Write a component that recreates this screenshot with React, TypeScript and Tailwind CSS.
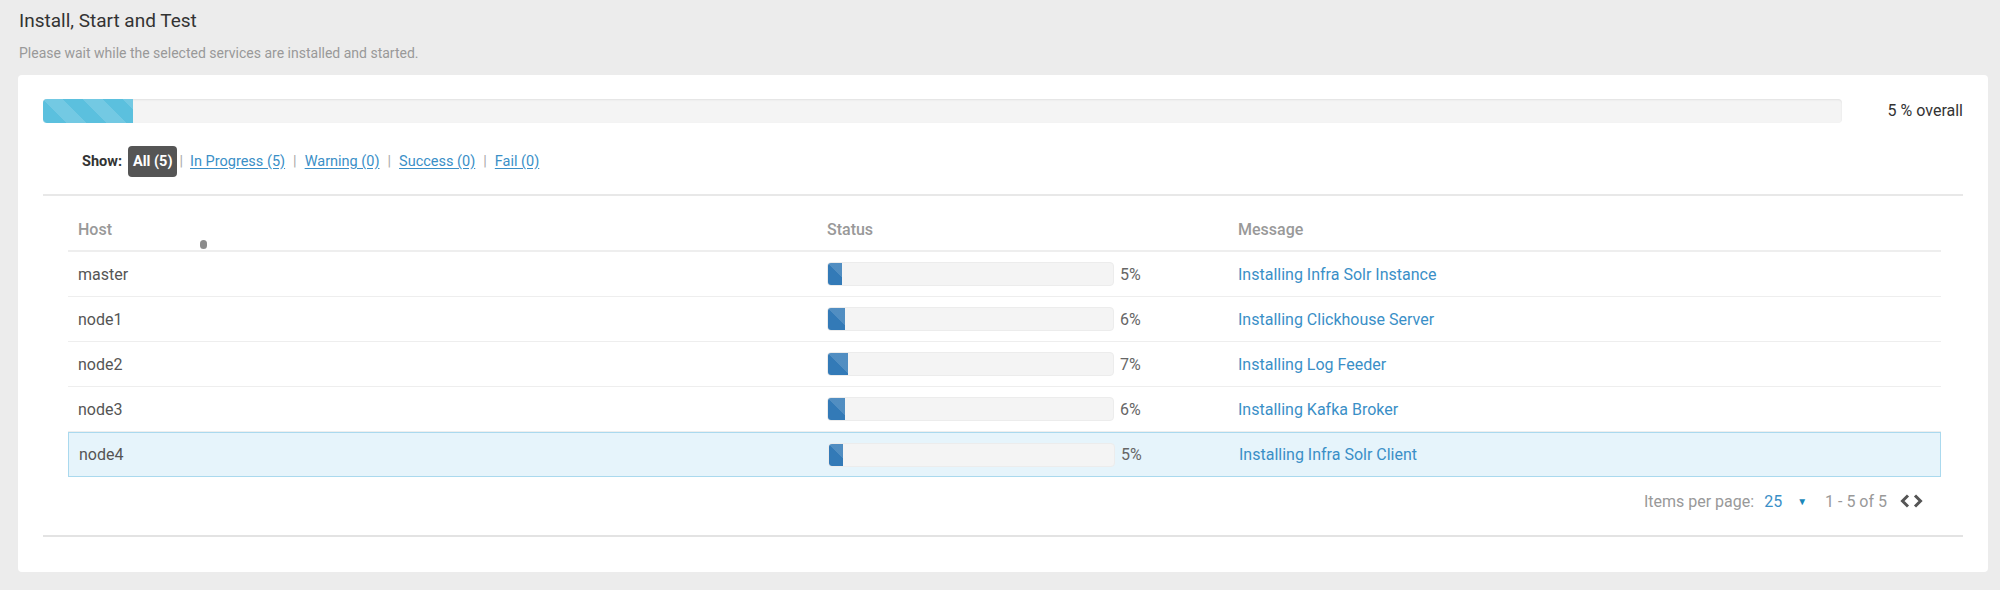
import React from "react";

const ROWS = [
  { host: "master", pct: 5, msg: "Installing Infra Solr Instance" },
  { host: "node1", pct: 6, msg: "Installing Clickhouse Server" },
  { host: "node2", pct: 7, msg: "Installing Log Feeder" },
  { host: "node3", pct: 6, msg: "Installing Kafka Broker" },
  { host: "node4", pct: 5, msg: "Installing Infra Solr Client" },
];

const FILTERS = ["In Progress (5)", "Warning (0)", "Success (0)", "Fail (0)"];

const stripes =
  "bg-[linear-gradient(45deg,rgba(255,255,255,.15)_25%,transparent_25%,transparent_50%,rgba(255,255,255,.15)_50%,rgba(255,255,255,.15)_75%,transparent_75%,transparent)] bg-[length:40px_40px]";

export default function App() {
  return (
    <div className="min-h-[590px] bg-[#ececec] pl-[18px] pr-[12px] pt-[9px] font-['Roboto',sans-serif]">
      <h2 className="pl-px text-[19px] leading-[24px] text-[#333]">Install, Start and Test</h2>
      <p className="mt-[10px] pl-px text-[14px] leading-[20px] text-[#999]">
        Please wait while the selected services are installed and started.
      </p>

      <div className="mt-[12px] h-[497px] rounded-[4px] bg-white px-[25px] pt-[24px]">
        {/* overall progress */}
        <div className="flex items-center">
          <div className="h-[24px] flex-1 overflow-hidden rounded-[4px] bg-[#f4f4f4] shadow-[inset_0_1px_2px_rgba(0,0,0,0.08)]">
            <div className={`h-full w-[5%] bg-[#5bc0de] ${stripes}`} />
          </div>
          <div className="w-[121px] text-right text-[16px] leading-[20px] text-[#333]">5 % overall</div>
        </div>

        {/* filter row */}
        <div className="mt-[23px] flex h-[31px] items-center pl-[39px] text-[14.5px] leading-[18px]">
          <span className="font-bold text-[#333]">Show:</span>
          <span className="ml-[6px] flex h-[31px] items-center rounded-[4px] bg-[#555] px-[5px] font-bold text-white">
            All (5)
          </span>
          <span className="pl-[2px] pr-[7px] text-[#aaa]">|</span>
          {FILTERS.map((f, i) => (
            <React.Fragment key={f}>
              <a className="cursor-pointer text-[#3a8fc7] underline underline-offset-2">{f}</a>
              {i < FILTERS.length - 1 && <span className="px-[8px] text-[#aaa]">|</span>}
            </React.Fragment>
          ))}
        </div>

        <div className="mt-[17px] h-[2px] bg-[#e8e8e8]" />

        {/* table */}
        <div className="ml-[25px] mr-[22px]">
          <div className="relative grid h-[56px] grid-cols-[749px_411px_1fr] items-end border-b-2 border-[#eee] pb-[11px] text-[16px] font-medium leading-[19px] text-[#999]">
            <div className="pl-[10px]">Host</div>
            <div className="pl-[10px]">Status</div>
            <div className="pl-[10px]">Message</div>
            <span className="absolute bottom-[1px] left-[132px] h-[9px] w-[7px] rounded-full bg-[#8c8c8c]" />
          </div>

          {ROWS.map((r, i) => {
            const last = i === ROWS.length - 1;
            return (
              <div
                key={r.host}
                className={`grid h-[45px] grid-cols-[749px_411px_1fr] items-center text-[16px] leading-[19px] ${
                  last ? "border border-[#aad9ee] bg-[#e6f4fb]" : "border-b border-[#eee]"
                }`}
              >
                <div className="pl-[10px] text-[#555]">{r.host}</div>
                <div className="flex items-center pl-[10px]">
                  <div className="h-[24px] w-[287px] overflow-hidden rounded-[4px] border border-[#ececec] bg-[#f4f4f4]">
                    <div className={`h-full bg-[#337ab7] ${stripes}`} style={{ width: `${r.pct}%` }} />
                  </div>
                  <span className="ml-[6px] text-[#666]">{r.pct}%</span>
                </div>
                <div className="pl-[10px] text-[#3a8fc7]">{r.msg}</div>
              </div>
            );
          })}

          {/* pagination */}
          <div className="flex h-[48px] items-center justify-end pr-[17px] text-[16px] leading-[19px] text-[#999]">
            <span>Items per page:</span>
            <span className="ml-[10px] text-[#3a8fc7]">25</span>
            <span className="ml-[15px] text-[10px] text-[#1a87b9]">▼</span>
            <span className="ml-[18px]">1 - 5 of 5</span>
            <svg className="ml-[12px]" width="25" height="16" viewBox="0 0 25 16" fill="none">
              <polyline points="9,2.5 3.5,8 9,13.5" stroke="#555" strokeWidth="3" strokeLinejoin="miter" />
              <polyline points="16,2.5 21.5,8 16,13.5" stroke="#555" strokeWidth="3" strokeLinejoin="miter" />
            </svg>
          </div>
        </div>

        <div className="mt-[10px] h-[2px] bg-[#e3e3e3]" />
      </div>
    </div>
  );
}
